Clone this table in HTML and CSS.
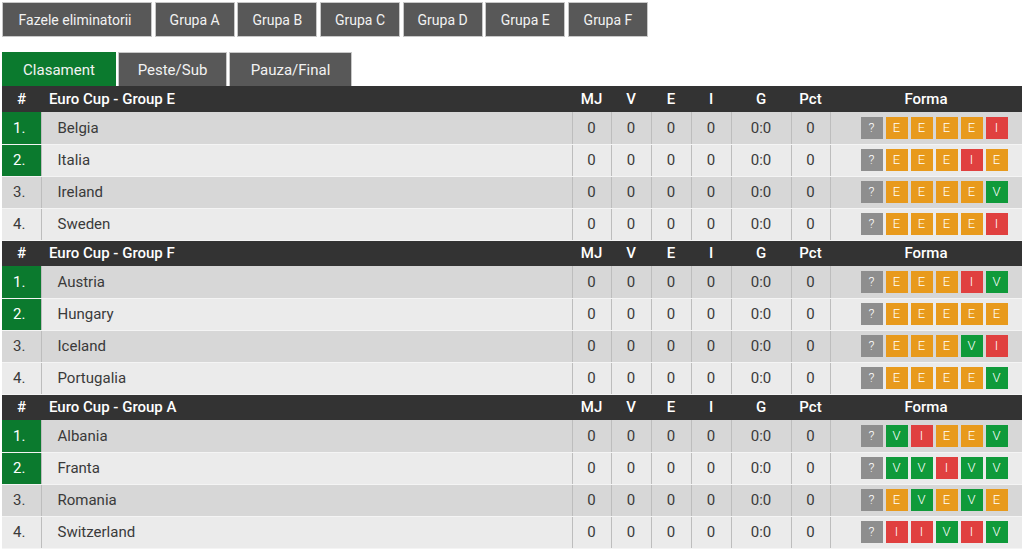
FILE: index.html
```html
<!DOCTYPE html>
<html lang="ro">
<head>
<meta charset="utf-8">
<link rel="stylesheet" href="styles.css">
</head>
<body>
<nav class="groups">
  <a class="gtab">Fazele eliminatorii</a>
  <a class="gtab">Grupa A</a>
  <a class="gtab">Grupa B</a>
  <a class="gtab">Grupa C</a>
  <a class="gtab">Grupa D</a>
  <a class="gtab">Grupa E</a>
  <a class="gtab">Grupa F</a>
</nav>
<nav class="views">
  <a class="vtab active">Clasament</a>
  <a class="vtab">Peste/Sub</a>
  <a class="vtab">Pauza/Final</a>
</nav>
<table class="standings">
  <colgroup>
    <col class="c-pos"><col class="c-name"><col class="c-n"><col class="c-n2"><col class="c-n2"><col class="c-n2"><col class="c-g"><col class="c-n"><col class="c-form">
  </colgroup>
  <tbody>
    <tr class="head"><th class="pos">#</th><th class="name">Euro Cup - Group E</th><th>MJ</th><th>V</th><th>E</th><th>I</th><th>G</th><th>Pct</th><th>Forma</th></tr>
    <tr class="odd"><td class="pos q">1.</td><td class="name">Belgia</td><td>0</td><td>0</td><td>0</td><td>0</td><td>0:0</td><td>0</td><td class="form"><span class="b u">?</span><span class="b e">E</span><span class="b e">E</span><span class="b e">E</span><span class="b e">E</span><span class="b l">I</span></td></tr>
    <tr class="even"><td class="pos q">2.</td><td class="name">Italia</td><td>0</td><td>0</td><td>0</td><td>0</td><td>0:0</td><td>0</td><td class="form"><span class="b u">?</span><span class="b e">E</span><span class="b e">E</span><span class="b e">E</span><span class="b l">I</span><span class="b e">E</span></td></tr>
    <tr class="odd"><td class="pos">3.</td><td class="name">Ireland</td><td>0</td><td>0</td><td>0</td><td>0</td><td>0:0</td><td>0</td><td class="form"><span class="b u">?</span><span class="b e">E</span><span class="b e">E</span><span class="b e">E</span><span class="b e">E</span><span class="b w">V</span></td></tr>
    <tr class="even"><td class="pos">4.</td><td class="name">Sweden</td><td>0</td><td>0</td><td>0</td><td>0</td><td>0:0</td><td>0</td><td class="form"><span class="b u">?</span><span class="b e">E</span><span class="b e">E</span><span class="b e">E</span><span class="b e">E</span><span class="b l">I</span></td></tr>

    <tr class="head"><th class="pos">#</th><th class="name">Euro Cup - Group F</th><th>MJ</th><th>V</th><th>E</th><th>I</th><th>G</th><th>Pct</th><th>Forma</th></tr>
    <tr class="odd"><td class="pos q">1.</td><td class="name">Austria</td><td>0</td><td>0</td><td>0</td><td>0</td><td>0:0</td><td>0</td><td class="form"><span class="b u">?</span><span class="b e">E</span><span class="b e">E</span><span class="b e">E</span><span class="b l">I</span><span class="b w">V</span></td></tr>
    <tr class="even"><td class="pos q">2.</td><td class="name">Hungary</td><td>0</td><td>0</td><td>0</td><td>0</td><td>0:0</td><td>0</td><td class="form"><span class="b u">?</span><span class="b e">E</span><span class="b e">E</span><span class="b e">E</span><span class="b e">E</span><span class="b e">E</span></td></tr>
    <tr class="odd"><td class="pos">3.</td><td class="name">Iceland</td><td>0</td><td>0</td><td>0</td><td>0</td><td>0:0</td><td>0</td><td class="form"><span class="b u">?</span><span class="b e">E</span><span class="b e">E</span><span class="b e">E</span><span class="b w">V</span><span class="b l">I</span></td></tr>
    <tr class="even"><td class="pos">4.</td><td class="name">Portugalia</td><td>0</td><td>0</td><td>0</td><td>0</td><td>0:0</td><td>0</td><td class="form"><span class="b u">?</span><span class="b e">E</span><span class="b e">E</span><span class="b e">E</span><span class="b e">E</span><span class="b w">V</span></td></tr>

    <tr class="head"><th class="pos">#</th><th class="name">Euro Cup - Group A</th><th>MJ</th><th>V</th><th>E</th><th>I</th><th>G</th><th>Pct</th><th>Forma</th></tr>
    <tr class="odd"><td class="pos q">1.</td><td class="name">Albania</td><td>0</td><td>0</td><td>0</td><td>0</td><td>0:0</td><td>0</td><td class="form"><span class="b u">?</span><span class="b w">V</span><span class="b l">I</span><span class="b e">E</span><span class="b e">E</span><span class="b w">V</span></td></tr>
    <tr class="even"><td class="pos q">2.</td><td class="name">Franta</td><td>0</td><td>0</td><td>0</td><td>0</td><td>0:0</td><td>0</td><td class="form"><span class="b u">?</span><span class="b w">V</span><span class="b w">V</span><span class="b l">I</span><span class="b w">V</span><span class="b w">V</span></td></tr>
    <tr class="odd"><td class="pos">3.</td><td class="name">Romania</td><td>0</td><td>0</td><td>0</td><td>0</td><td>0:0</td><td>0</td><td class="form"><span class="b u">?</span><span class="b e">E</span><span class="b w">V</span><span class="b e">E</span><span class="b w">V</span><span class="b e">E</span></td></tr>
    <tr class="even"><td class="pos">4.</td><td class="name">Switzerland</td><td>0</td><td>0</td><td>0</td><td>0</td><td>0:0</td><td>0</td><td class="form"><span class="b u">?</span><span class="b l">I</span><span class="b l">I</span><span class="b w">V</span><span class="b l">I</span><span class="b w">V</span></td></tr>
  </tbody>
</table>
</body>
</html>
```
FILE: styles.css
```css
* { box-sizing: border-box; }
body {
  margin: 2px;
  background: #fff;
  font-family: Roboto, "Liberation Sans", sans-serif;
  font-size: 15px;
  color: #3a3a3a;
}
.groups {
  display: flex;
  gap: 2.67px;
  height: 35px;
}
.gtab {
  display: flex;
  align-items: center;
  justify-content: center;
  background: #585858;
  color: #f2f2f2;
  border: 1px solid #c8c8c8;
  font-size: 14px;
  width: 80px;
}
.gtab:first-child { width: 150px; padding-right: 4px; }
.views {
  display: flex;
  gap: 2px;
  height: 34px;
  margin-top: 15px;
}
.vtab {
  display: flex;
  align-items: center;
  justify-content: center;
  background: #585858;
  color: #f2f2f2;
  border: 1px solid #c8c8c8;
  border-bottom: none;
  font-size: 15px;
}
.vtab:nth-child(1) { width: 114px; }
.vtab:nth-child(2) { width: 109px; }
.vtab:nth-child(3) { width: 123px; }
.vtab.active { background: #0b7a2e; border-color: #0b7a2e; }

.standings {
  width: 1020px;
  table-layout: fixed;
  border-collapse: collapse;
}
.c-pos { width: 39px; }
.c-name { width: 531px; }
.c-n { width: 39px; }
.c-n2 { width: 40px; }
.c-g { width: 60px; }
.c-form { width: 192px; }

.head th {
  height: 26px;
  background: #333;
  color: #fff;
  font-weight: 500;
  font-size: 15px;
  text-align: center;
  padding: 0;
}
.head th.name { text-align: left; padding-left: 8px; }

td {
  height: 32px;
  padding: 0;
  text-align: center;
  border-left: 1px solid #bdbdbd;
  border-bottom: 1px solid #f4f4f4;
}
td:first-child { border-left: none; }
.odd td { background: #d7d7d7; }
.even td { background: #ebebeb; }
td.name { text-align: left; padding-left: 16px; }
td.pos { text-align: left; padding-left: 11px; }
.odd td.q, .even td.q { background: #0b7a2e; color: #fff; }

td.form {
  text-align: left;
  padding-left: 30px;
  font-size: 0;
}
.b {
  display: inline-block;
  width: 22px;
  height: 22px;
  line-height: 22px;
  margin-right: 3px;
  text-align: center;
  color: #fff;
  font-size: 13px;
  font-weight: 300;
  vertical-align: middle;
}
.b.u { background: #8e8e8e; }
.b.e { background: #e89a1c; }
.b.l { background: #e0403f; }
.b.w { background: #0f9a3a; }
```
